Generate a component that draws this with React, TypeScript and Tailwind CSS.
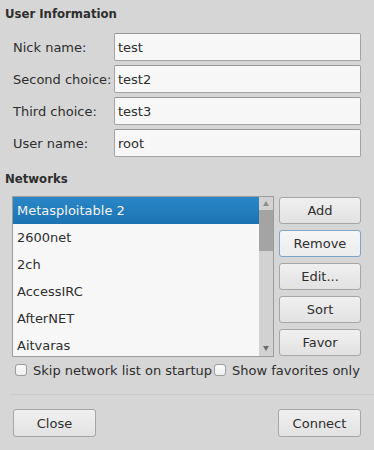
import React from "react";

function Btn({ label, focus = false }: { label: string; focus?: boolean }) {
  return (
    <div
      className={
        "w-[82px] h-[27px] rounded-[3px] border flex items-center justify-center " +
        (focus
          ? "border-[#7ea6c8] bg-linear-to-b from-[#f6f6f6] to-[#ececec]"
          : "border-[#a6a6a6] bg-linear-to-b from-[#f0f0f0] to-[#e2e2e2]")
      }
    >
      {label}
    </div>
  );
}

function Check() {
  return <div className="w-[12px] h-[12px] rounded-[3px] border border-[#9c9c9c] bg-linear-to-b from-[#fbfbfb] to-[#eeeeee]" />;
}

export default function App() {
  const rows = [
    ["Nick name:", "test"],
    ["Second choice:", "test2"],
    ["Third choice:", "test3"],
    ["User name:", "root"],
  ];
  const nets = ["Metasploitable 2", "2600net", "2ch", "AccessIRC", "AfterNET", "Aitvaras"];
  return (
    <div className="w-[374px] h-[450px] bg-[#d6d6d6] text-[#2e2e2e] font-['DejaVu_Sans',sans-serif] text-[13px] leading-[17px] overflow-hidden pt-[5px] flex flex-col">
      <div className="pl-[5px] font-bold h-[17px] font-['DejaVu_Sans_Condensed','DejaVu_Sans',sans-serif] [font-stretch:condensed]">
        User Information
      </div>
      <div className="mt-[11px] flex flex-col gap-[4px] pl-[13px]">
        {rows.map(([l, v]) => (
          <div key={l} className="flex items-center h-[28px]">
            <div className="w-[101px] whitespace-nowrap">{l}</div>
            <div className="w-[247px] h-[28px] border border-[#a3a3a3] border-t-[#989898] rounded-[2px] bg-[#f7f7f7] pl-[3px] flex items-center">
              {v}
            </div>
          </div>
        ))}
      </div>
      <div className="pl-[5px] font-bold h-[17px] mt-[13px] font-['DejaVu_Sans_Condensed','DejaVu_Sans',sans-serif] [font-stretch:condensed]">
        Networks
      </div>
      <div className="mt-[9px] flex items-start pl-[12px]">
        <div className="w-[262px] h-[161px] border border-[#9c9c9c] flex bg-[#f7f7f7]">
          <div className="flex-1 overflow-hidden">
            {nets.map((n, i) => (
              <div
                key={n}
                className={
                  "h-[27px] leading-[27px] pl-[4px] whitespace-nowrap " +
                  (i === 0 ? "bg-linear-to-b from-[#2a87c7] to-[#1b72b3] text-[#f4f4f4]" : "")
                }
              >
                {n}
              </div>
            ))}
          </div>
          <div className="w-[14px] bg-[#d2d2d2] flex flex-col items-center">
            <div className="h-[13px] flex items-center justify-center">
              <svg width="6" height="5" viewBox="0 0 6 5">
                <path d="M3 0 L6 5 L0 5 Z" fill="#8c8c8c" />
              </svg>
            </div>
            <div className="w-[14px] h-[41px] bg-[#a4a4a4]" />
            <div className="flex-1" />
            <div className="h-[12px] flex items-start justify-center pt-[2px]">
              <svg width="6" height="5" viewBox="0 0 6 5">
                <path d="M0 0 L6 0 L3 5 Z" fill="#6e6e6e" />
              </svg>
            </div>
          </div>
        </div>
        <div className="ml-[5px] mt-[1px] flex flex-col gap-[6px]">
          <Btn label="Add" />
          <Btn label="Remove" focus />
          <Btn label="Edit..." />
          <Btn label="Sort" />
          <Btn label="Favor" />
        </div>
      </div>
      <div className="mt-[5px] h-[16px] flex items-center pl-[15px] whitespace-nowrap">
        <Check />
        <span className="ml-[6px]">Skip network list on startup</span>
        <div className="ml-[2px]">
          <Check />
        </div>
        <span className="ml-[6px]">Show favorites only</span>
      </div>
      <div className="mt-[16px] h-px ml-[10px] bg-[#cbcbcb]" />
      <div className="mt-[14px] flex justify-between pl-[13px] pr-[13px]">
        <div className="w-[83px] h-[28px] rounded-[3px] border border-[#a6a6a6] bg-linear-to-b from-[#f0f0f0] to-[#e2e2e2] flex items-center justify-center">
          Close
        </div>
        <div className="w-[83px] h-[28px] rounded-[3px] border border-[#a6a6a6] bg-linear-to-b from-[#f0f0f0] to-[#e2e2e2] flex items-center justify-center">
          Connect
        </div>
      </div>
    </div>
  );
}
